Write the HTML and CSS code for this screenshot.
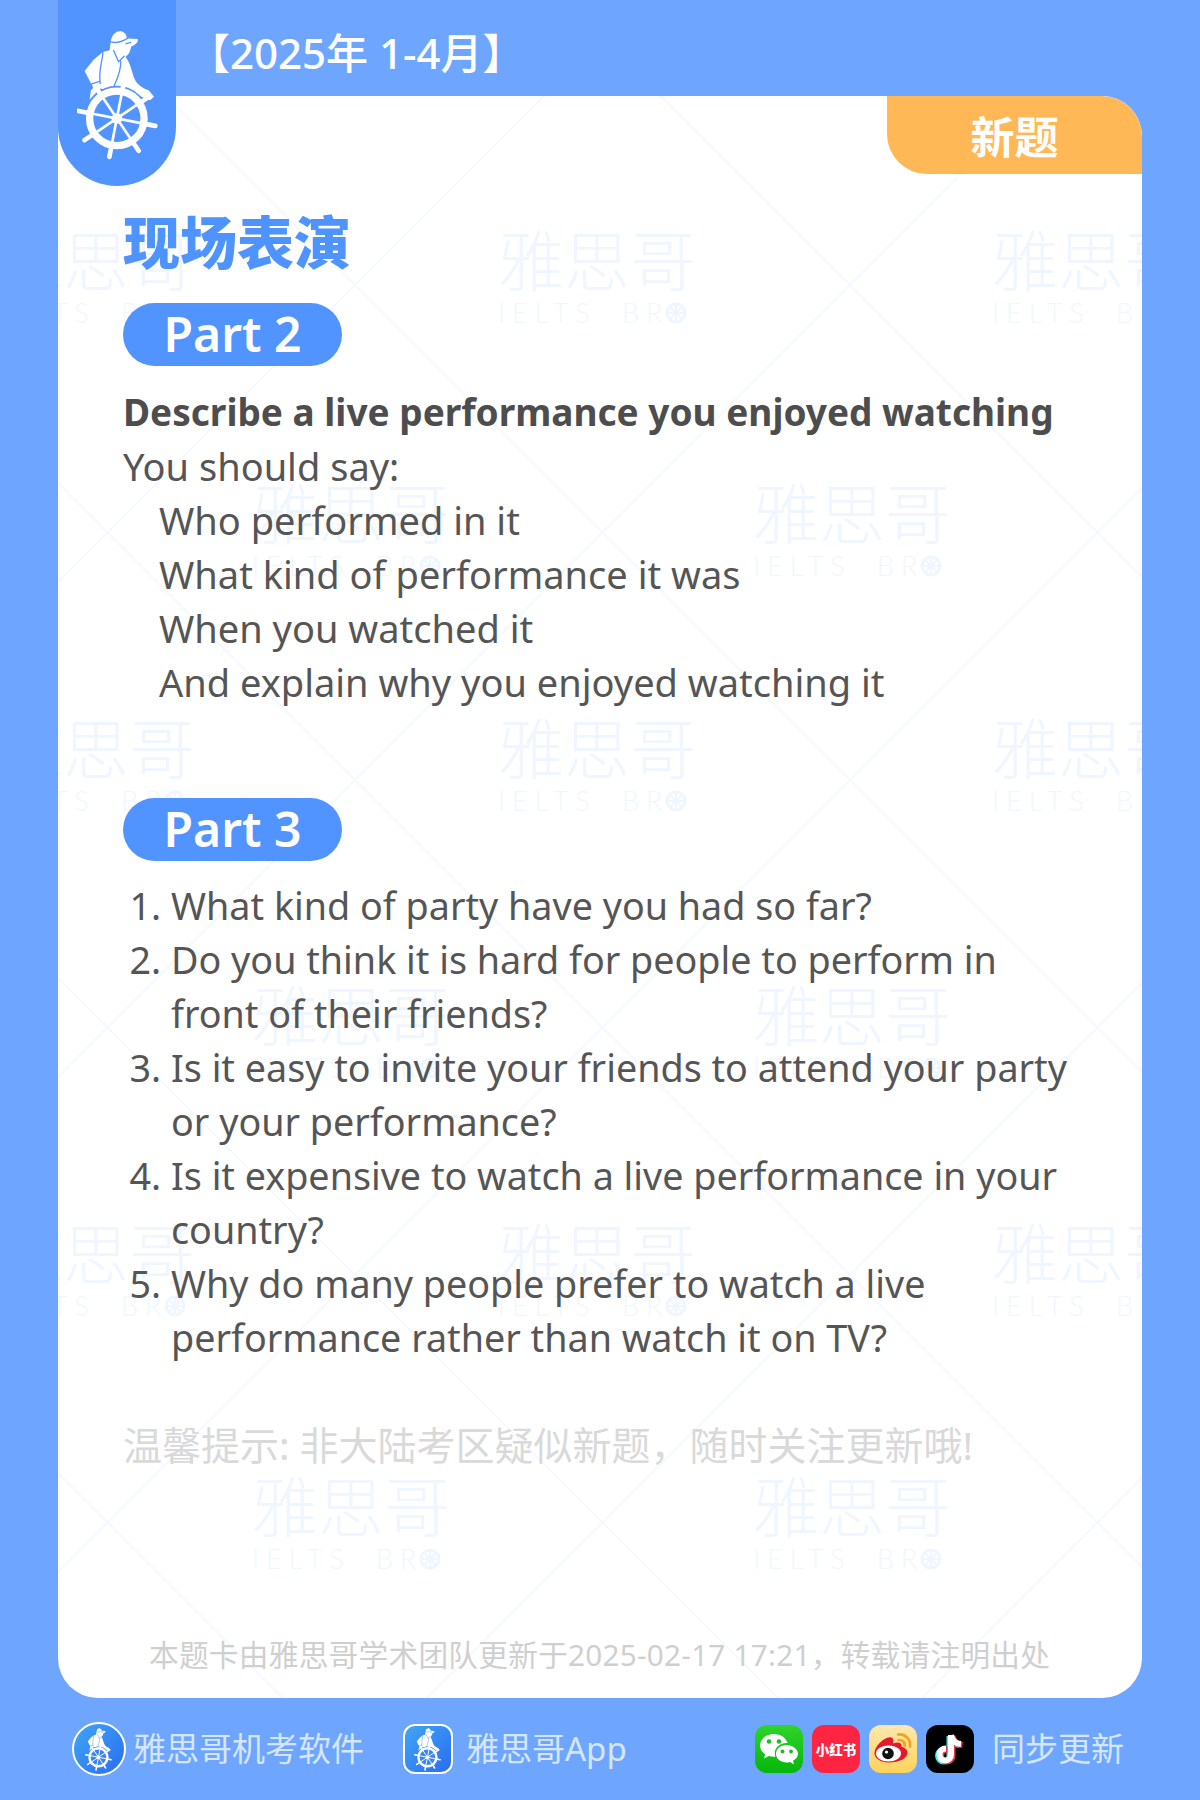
FILE: index.html
```html
<!DOCTYPE html>
<html lang="zh-CN">
<head>
<meta charset="utf-8">
<title>现场表演</title>
<link rel="stylesheet" href="styles.css">
</head>
<body>
<svg class="defs" width="0" height="0" aria-hidden="true">
  <defs>
    <symbol id="helm" viewBox="80 80 250 400">
      <path class="fig" d="M182 122C186 100 200 90 215 93C226 96 230 106 230 114L262 116C268 120 258 134 244 138L240 150C238 162 230 166 226 170C236 180 244 205 250 228C258 250 272 262 296 270L312 290L300 300L270 288L150 265L118 298L122 270L130 262L122 250L103 212L130 178L158 155L178 150Z"/>
      <path class="cut" d="M178 124C198 130 216 124 232 114M158 157C156 190 144 205 150 250M190 150L205 184L222 168M212 182C212 220 198 240 190 262M228 130L242 126M122 252L146 244"/>
      <circle class="gap" cx="200" cy="355" r="98"/>
      <g transform="translate(200 355) rotate(11)">
        <path class="bar" d="M-118 0H118M-83 -83L83 83M0 -118V118M-83 83L83 -83"/>
        <circle class="gap-fill" r="74"/>
        <path class="spoke" d="M-78 0H78M-55 -55L55 55M0 -78V78M-55 55L55 -55"/>
      </g>
      <circle class="ring" cx="200" cy="355" r="82"/>
      <circle class="hub" cx="200" cy="355" r="16"/>
    </symbol>
    <symbol id="mark" viewBox="0 0 196 100" overflow="visible">
      <text class="wm-cn" x="0" y="56">雅思哥</text>
      <text class="wm-en" x="0" y="93">IELTS BR</text>
      <circle class="wm-ring" cx="178" cy="83" r="9"/>
      <path class="wm-spoke" d="M169 83H187M178 74V92M172 77L184 89M172 89L184 77"/>
    </symbol>
  </defs>
</svg>

<main class="page">
  <header class="strip">
    <div class="tab">
      <svg class="tab-logo"><use href="#helm"/></svg>
    </div>
    <p class="period">【2025年 1-4月】</p>
  </header>

  <section class="card">
    <svg class="watermark" viewBox="58 96 1084 1602" aria-hidden="true">
      <path class="wm-lines" d="M-400 -470L1900 1830M95 -470L2395 1830M590 -470L2890 1830M-895 -470L1405 1830M-1390 -470L910 1830M-1885 -470L415 1830M1085 -470L3385 1830M2030 -400L-270 1900M1535 -400L-765 1900M1040 -400L-1260 1900M2525 -400L225 1900M3020 -400L720 1900M3515 -400L1215 1900"/>
      <use href="#mark" x="-3" y="230" width="196" height="100"/>
      <use href="#mark" x="498" y="230" width="196" height="100"/>
      <use href="#mark" x="992" y="230" width="196" height="100"/>
      <use href="#mark" x="252" y="483" width="196" height="100"/>
      <use href="#mark" x="753" y="483" width="196" height="100"/>
      <use href="#mark" x="-3" y="718" width="196" height="100"/>
      <use href="#mark" x="498" y="718" width="196" height="100"/>
      <use href="#mark" x="992" y="718" width="196" height="100"/>
      <use href="#mark" x="252" y="985" width="196" height="100"/>
      <use href="#mark" x="753" y="985" width="196" height="100"/>
      <use href="#mark" x="-3" y="1223" width="196" height="100"/>
      <use href="#mark" x="498" y="1223" width="196" height="100"/>
      <use href="#mark" x="992" y="1223" width="196" height="100"/>
      <use href="#mark" x="252" y="1476" width="196" height="100"/>
      <use href="#mark" x="753" y="1476" width="196" height="100"/>
    </svg>
    <div class="badge">新题</div>
    <div class="content">
      <h1 class="title">现场表演</h1>
      <div class="pill">Part 2</div>
      <div class="cue">
        <p class="text strong">Describe a live performance you enjoyed watching</p>
        <p class="text">You should say:</p>
        <p class="text sub">Who performed in it</p>
        <p class="text sub">What kind of performance it was</p>
        <p class="text sub">When you watched it</p>
        <p class="text sub">And explain why you enjoyed watching it</p>
      </div>
      <div class="pill pill-3">Part 3</div>
      <ol class="questions">
        <li>What kind of party have you had so far?</li>
        <li>Do you think it is hard for people to perform in front of their friends?</li>
        <li>Is it easy to invite your friends to attend your party or your performance?</li>
        <li>Is it expensive to watch a live performance in your country?</li>
        <li>Why do many people prefer to watch a live performance rather than watch it on TV?</li>
      </ol>
      <p class="tip">温馨提示: 非大陆考区疑似新题，随时关注更新哦!</p>
      <p class="note">本题卡由雅思哥学术团队更新于2025-02-17 17:21，转载请注明出处</p>
    </div>
  </section>

  <footer class="foot">
    <div class="foot-item">
      <span class="mini mini-round"><svg class="mini-logo"><use href="#helm"/></svg></span>
      <span class="foot-text">雅思哥机考软件</span>
    </div>
    <div class="foot-item foot-app">
      <span class="mini mini-square"><svg class="mini-logo"><use href="#helm"/></svg></span>
      <span class="foot-text">雅思哥App</span>
    </div>
    <div class="socials">
      <svg class="social" viewBox="0 0 48 48">
        <defs><linearGradient id="wxg" x1="0" y1="0" x2="0" y2="1"><stop offset="0" stop-color="#2ed52a"/><stop offset="1" stop-color="#07b50c"/></linearGradient></defs>
        <rect width="48" height="48" rx="12" fill="url(#wxg)"/>
        <path d="M19 9C11 9 5 14.300 5 20.500C5 24.200 7 27.200 10.200 29.300L9 33.500L13.800 31C15.500 31.500 17.200 31.800 19 31.800C19.500 31.800 20 31.800 20.500 31.700C20 30.500 19.800 29.300 19.800 28.200C19.800 22.500 25 18 31.500 18C31.900 18 32.300 18 32.600 18.100C31.200 12.800 25.600 9 19 9Z" fill="#fff"/>
        <circle cx="14" cy="16.500" r="2.300" fill="#16c01a"/><circle cx="24" cy="16.500" r="2.300" fill="#16c01a"/>
        <path d="M31.500 20C25.700 20 21 24 21 28.800C21 33.600 25.700 37.600 31.500 37.600C32.800 37.600 34 37.400 35.100 37L39 39.500L38 35.700C41 34.100 43 31.600 43 28.800C43 24 37.300 20 31.500 20Z" fill="#fff"/>
        <circle cx="27.500" cy="26.500" r="1.900" fill="#16c01a"/><circle cx="36" cy="26.500" r="1.900" fill="#16c01a"/>
      </svg>
      <span class="social social-red">小红书</span>
      <svg class="social" viewBox="0 0 48 48">
        <defs><linearGradient id="wbg" x1="0" y1="0" x2="0" y2="1"><stop offset="0" stop-color="#fde8ae"/><stop offset="1" stop-color="#fdd35c"/></linearGradient></defs>
        <rect width="48" height="48" rx="12" fill="url(#wbg)"/>
        <path d="M20 37.500C11.500 37.500 5.500 33.500 5.500 28C5.500 22 14 12.500 21 12.300C24.500 12.300 25 15.500 24 18.500C29 16.500 33 17.500 32.500 21.500C36.500 23 38.500 25 38.500 28C38.500 33 30.500 37.500 20 37.500Z" fill="#e6162d"/>
        <ellipse cx="19.500" cy="28.500" rx="12.500" ry="8" fill="#fff"/>
        <circle cx="19" cy="28.500" r="5.800" fill="#111"/>
        <circle cx="17.500" cy="27" r="1.600" fill="#fff"/>
        <path d="M29 9.500C36 8.500 42 14 41 21.500M29.500 15C33 14.500 36.500 17.500 35.500 21" fill="none" stroke="#f5a01f" stroke-width="2.600" stroke-linecap="round"/>
      </svg>
      <svg class="social" viewBox="0 0 48 48">
        <rect width="48" height="48" rx="12" fill="#000"/>
        <path class="tk" d="M25 10V29.500C25 33 22.500 35.500 19.500 35.500C16 35.500 13.500 33 13.500 29.500C13.500 26 16.500 23.500 20 23.500M25 10C26 15 29.500 18.500 35 19" stroke="#25f4ee" transform="translate(-1.500 1)"/>
        <path class="tk" d="M25 10V29.500C25 33 22.500 35.500 19.500 35.500C16 35.500 13.500 33 13.500 29.500C13.500 26 16.500 23.500 20 23.500M25 10C26 15 29.500 18.500 35 19" stroke="#fe2c55" transform="translate(1.500 1)"/>
        <path class="tk" d="M25 10V29.500C25 33 22.500 35.500 19.500 35.500C16 35.500 13.500 33 13.500 29.500C13.500 26 16.500 23.500 20 23.500M25 10C26 15 29.500 18.500 35 19" stroke="#fff"/>
      </svg>
      <span class="foot-text foot-sync">同步更新</span>
    </div>
  </footer>
</main>
</body>
</html>
```
FILE: styles.css
```css
* { box-sizing: border-box; margin: 0; padding: 0; }
html, body { width: 1200px; height: 1800px; overflow: hidden; }
body {
  background: #6ea6ff;
  font-family: "Noto Sans", "Noto Sans CJK SC", sans-serif;
  color: #555;
}
.defs { position: absolute; }
.page { display: flex; flex-direction: column; width: 1200px; height: 1800px; padding: 0 58px; position: relative; }

.strip { height: 96px; display: flex; align-items: center; }
.tab {
  position: absolute; left: 58px; top: 0; z-index: 3;
  width: 118px; height: 186px;
  background: #5294ff;
  border-radius: 0 0 59px 59px;
  --gap: #5294ff;
}
.tab-logo { position: absolute; left: 19px; top: 27px; width: 83px; height: 133px; }
.period {
  margin-left: 130px; padding-top: 10px;
  font-family: "Noto Sans", "Noto Sans CJK SC", sans-serif;
  font-size: 42px; font-weight: 500; line-height: 54px; color: #fff; white-space: nowrap;
}

.fig { fill: #fff; }
.cut { fill: none; stroke: var(--gap); stroke-width: 4; stroke-linecap: round; }
.gap { fill: var(--gap); }
.gap-fill { fill: var(--gap); }
.bar { fill: none; stroke: #fff; stroke-width: 14; stroke-linecap: round; }
.spoke { fill: none; stroke: #fff; stroke-width: 8; }
.ring { fill: none; stroke: #fff; stroke-width: 22; }
.hub { fill: #fff; }

.card { position: relative; height: 1602px; background: #fff; border-radius: 40px; overflow: hidden; }
.watermark { position: absolute; inset: 0; width: 100%; height: 100%; }
.wm-lines { fill: none; stroke: #f5f9ff; stroke-width: 2; }
.wm-cn { font-family: "Noto Sans CJK SC", sans-serif; font-weight: 300; font-size: 66px; fill: #eff6ff; }
.wm-en { font-family: "Lato", sans-serif; font-weight: 300; font-size: 27px; letter-spacing: 7px; word-spacing: 11px; fill: #f1f6fd; }
.wm-ring { fill: none; stroke: #eff6ff; stroke-width: 3; }
.wm-spoke { fill: none; stroke: #eff6ff; stroke-width: 2; }

.badge {
  position: absolute; right: 0; top: 0; z-index: 2;
  width: 255px; height: 78px;
  display: flex; align-items: center; justify-content: center;
  background: #ffb855;
  border-radius: 0 40px 0 40px;
  font-family: "Noto Sans CJK SC", sans-serif;
  font-size: 44px; font-weight: 700; color: #fff;
}

.content { position: relative; z-index: 1; padding: 109px 65px 0 65px; }
.title {
  height: 68px; margin-bottom: 30px;
  font-family: "Noto Sans CJK SC", sans-serif;
  font-size: 57px; line-height: 68px; font-weight: 900; color: #4f93ff;
}
.pill {
  display: flex; align-items: center; justify-content: center;
  width: 219px; height: 63px; padding-bottom: 3px;
  background: #5294ff; border-radius: 32px;
  font-size: 48px; font-weight: 600; color: #fff;
}
.cue { margin-top: 18px; }
.text { font-size: 38px; line-height: 54px; color: #555; white-space: nowrap; }
.strong { font-size: 37px; font-weight: 700; color: #4d4d4d; line-height: 55px; }
.sub { padding-left: 36px; }
.pill-3 { margin-top: 89px; }
.questions { margin-top: 18px; padding-left: 48px; font-size: 37.700px; line-height: 54px; color: #555; }
.tip {
  margin-top: 53px;
  font-family: "Noto Sans", "Noto Sans CJK SC", sans-serif;
  font-size: 39px; line-height: 54px; color: #d9d9d9; white-space: nowrap;
}
.note {
  margin-top: 163px; margin-left: 26px;
  font-family: "Noto Sans", "Noto Sans CJK SC", sans-serif;
  font-size: 29.700px; letter-spacing: 0.250px; line-height: 40px; color: #cfcfcf; white-space: nowrap;
}

.foot { flex: 1; display: flex; align-items: center; padding: 0 18px 0 14px; }
.foot-item { display: flex; align-items: center; gap: 7px; }
.foot-app { margin-left: 39px; gap: 13px; }
.foot-text {
  font-family: "Noto Sans", "Noto Sans CJK SC", sans-serif;
  font-size: 33px; line-height: 48px; color: #d6e6ff; white-space: nowrap;
}
.mini {
  display: flex; align-items: center; justify-content: center;
  background: linear-gradient(135deg, #3fa6f5, #2b6cf0);
  border: 2px solid #fff;
  --gap: #3a86f2;
}
.mini-round { width: 54px; height: 54px; border-radius: 50%; }
.mini-square { width: 50px; height: 50px; border-radius: 12px; }
.mini-logo { width: 28px; height: 44px; }
.socials { margin-left: auto; display: flex; align-items: center; }
.social { width: 48px; height: 48px; margin-right: 9px; flex: none; }
.social-red {
  display: flex; align-items: center; justify-content: center;
  background: #ff2442; border-radius: 12px;
  font-family: "Noto Sans CJK SC", sans-serif;
  font-size: 13.500px; font-weight: 900; color: #fff; white-space: nowrap;
}
.tk { fill: none; stroke-width: 6; }
.foot-sync { margin-left: 9px; }
```
